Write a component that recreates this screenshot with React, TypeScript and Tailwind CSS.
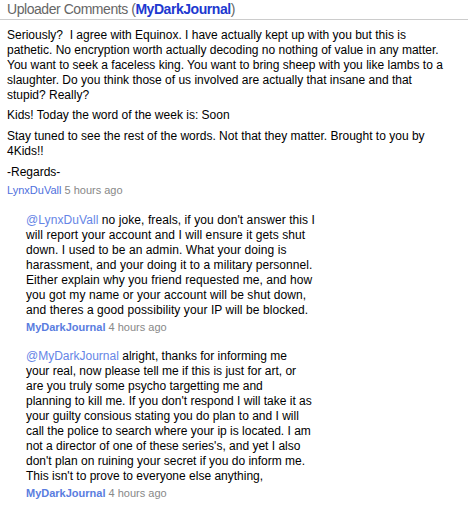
const reply1 =
  " no joke, freals, if you don't answer this I will report your account and I will ensure it gets shut down. I used to be an admin. What your doing is harassment, and your doing it to a military personnel. Either explain why you friend requested me, and how you got my name or your account will be shut down, and theres a good possibility your IP will be blocked.";

const reply2Lines = [
  ' alright, thanks for informing me',
  "your real, now please tell me if this is just for art, or",
  'are you truly some psycho targetting me and',
  "planning to kill me. If you don't respond I will take it as",
  'your guilty consious stating you do plan to and I will',
  'call the police to search where your ip is located. I am',
  "not a director of one of these series's, and yet I also",
  "don't plan on ruining your secret if you do inform me.",
  "This isn't to prove to everyone else anything,",
];

function Meta({ author, time }: { author: string; time: string }) {
  return (
    <div className="mt-[2px] text-[11px] leading-[14px]">
      <a className="font-bold text-[#5a7de0]">{author}</a>{' '}
      <span className="text-[#888888]">{time}</span>
    </div>
  );
}

export default function App() {
  return (
    <div className="w-[470px] h-[512px] bg-white overflow-hidden font-['Liberation_Sans',Arial,sans-serif] text-black">
      <div className="px-[7px] pt-[1px] pb-[2px] mr-[2px] border-b border-[#cccccc] text-[14px] leading-[16px] tracking-[-0.45px] text-[#666666]">
        Uploader Comments (<a className="font-bold text-[#2038d0]">MyDarkJournal</a>)
      </div>

      <div className="px-[7px] pt-[8px] text-[12px] leading-[15px]">
        <p className="w-[446px]">
          Seriously?&nbsp; I agree with Equinox. I have actually kept up with you but this is pathetic. No encryption worth actually decoding no nothing of value in any matter. You want to seek a faceless king. You want to bring sheep with you like lambs to a slaughter. Do you think those of us involved are actually that insane and that stupid? Really?
        </p>
        <p className="mt-[5px]">Kids! Today the word of the week is: Soon</p>
        <p className="mt-[6px] w-[440px]">
          Stay tuned to see the rest of the words. Not that they matter. Brought to you by 4Kids!!
        </p>
        <p className="mt-[6px]">-Regards-</p>
        <div className="mt-[3px] text-[11px] leading-[14px]">
          <a className="text-[#4f70dd]">LynxDuVall</a> <span className="text-[#888888]">5 hours ago</span>
        </div>
      </div>

      <div className="pl-[26px] pt-[16px] flex flex-col gap-[15px]">
        <div className="w-[291px]">
          <p className="text-[12px] leading-[15px] tracking-[0.08px]">
            <a className="text-[#6585e6]">@LynxDuVall</a>
            {reply1}
          </p>
          <Meta author="MyDarkJournal" time="4 hours ago" />
        </div>

        <div className="w-[300px]">
          <p className="text-[12px] leading-[15px]">
            <a className="text-[#6585e6]">@MyDarkJournal</a>
            {reply2Lines.map((line, i) => (
              <span key={i}>
                {i > 0 && <br />}
                {line}
              </span>
            ))}
          </p>
          <Meta author="MyDarkJournal" time="4 hours ago" />
        </div>
      </div>
    </div>
  );
}
